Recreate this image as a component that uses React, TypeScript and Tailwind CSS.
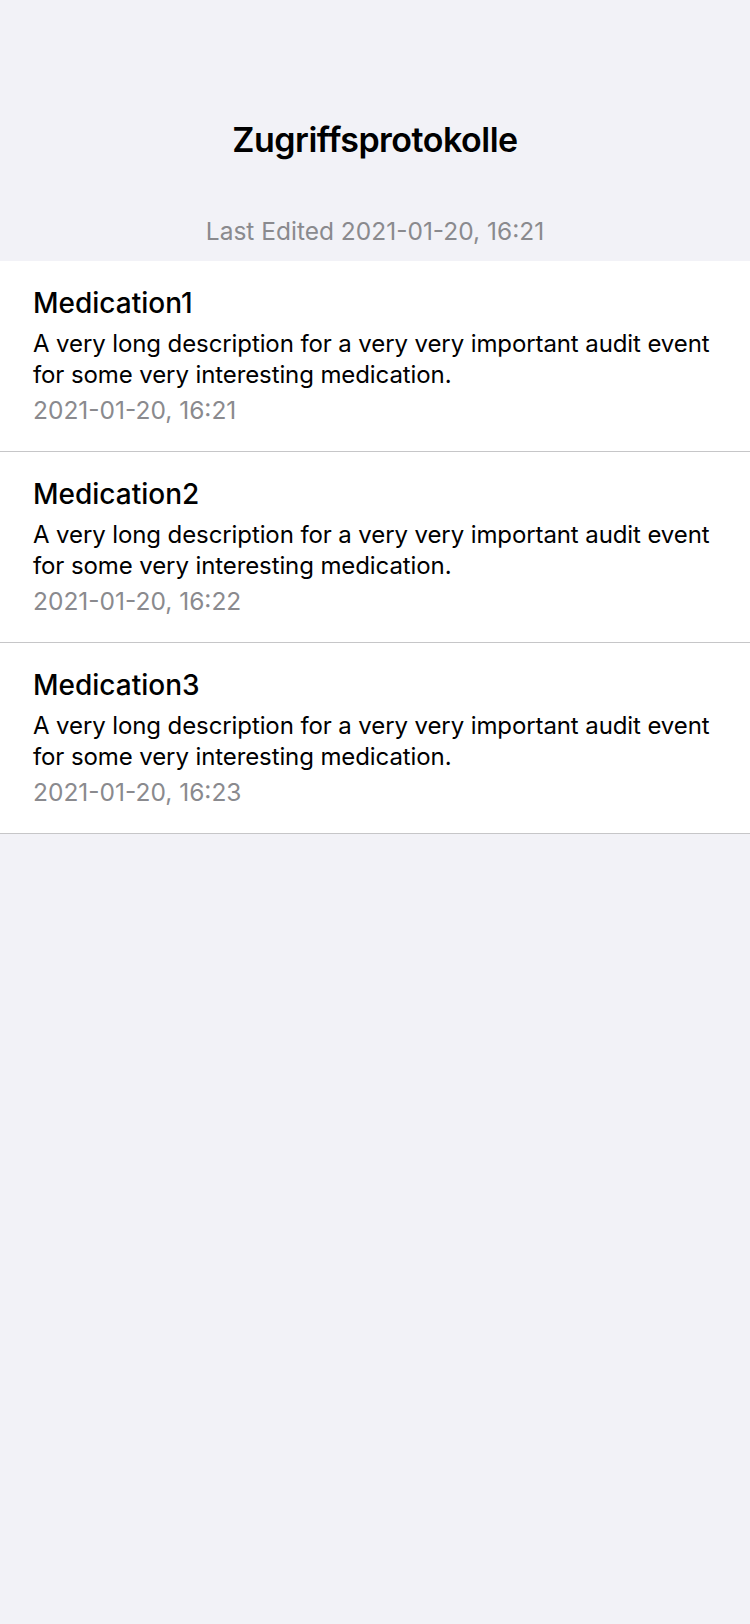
const entries = [
  { name: "Medication1", time: "2021-01-20, 16:21" },
  { name: "Medication2", time: "2021-01-20, 16:22" },
  { name: "Medication3", time: "2021-01-20, 16:23" },
];

const description =
  "A very long description for a very very important audit event for some very interesting medication.";

export default function App() {
  return (
    <div
      className="min-h-[1624px] w-[750px] bg-[#f2f2f7] text-black antialiased"
      style={{ fontFamily: "Inter, 'Noto Sans', sans-serif" }}
    >
      <header className="flex flex-col items-center pt-[120px] pb-[15px]">
        <h1 className="text-[34px] leading-[40px] font-semibold tracking-[-0.5px]">
          Zugriffsprotokolle
        </h1>
        <p className="mt-[56px] text-[24.5px] leading-[30px] text-[#8a8a8e]">
          Last Edited 2021-01-20, 16:21
        </p>
      </header>
      <ul className="bg-white">
        {entries.map((e) => (
          <li
            key={e.name}
            className="border-b border-[#c6c6c8] pt-[26px] pb-[26px] pl-[33px] pr-[30px]"
          >
            <div className="text-[28px] leading-[32px] font-medium">{e.name}</div>
            <p className="mt-[9px] text-[24px] leading-[31px] tracking-[-0.1px]">
              {description}
            </p>
            <div className="mt-[5px] text-[24.5px] leading-[30px] text-[#8a8a8e]">
              {e.time}
            </div>
          </li>
        ))}
      </ul>
    </div>
  );
}
